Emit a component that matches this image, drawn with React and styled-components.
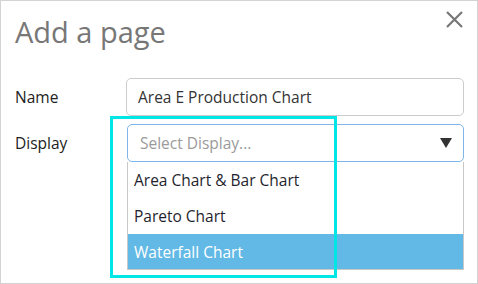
import styled, { createGlobalStyle } from "styled-components"

const GlobalStyle = createGlobalStyle`
    html, body {
        margin: 0;
        padding: 0;
        background: #fff;
    }
    body {
        font-family: "Open Sans", "Noto Sans", sans-serif;
    }
`

export default function App(){
    const options = ["Area Chart & Bar Chart", "Pareto Chart", "Waterfall Chart"]
    const selected = 2

    return(
        <>
        <GlobalStyle/>
        <Dialog>
            <Header>
                <Title>Add a page</Title>
                <Close aria-label="Close">
                    <svg width="17" height="17" viewBox="0 0 17 17">
                        <path d="M1 1 L16 16 M16 1 L1 16" stroke="#777" strokeWidth="2.2" fill="none"/>
                    </svg>
                </Close>
            </Header>
            <Form>
                <Label>Name</Label>
                <Input defaultValue="Area E Production Chart"/>
                <Label>Display</Label>
                <SelectWrap>
                    <Select>
                        <Placeholder>Select Display...</Placeholder>
                        <svg width="12" height="10" viewBox="0 0 12 10">
                            <polygon points="0,0 12,0 6,10" fill="#333"/>
                        </svg>
                    </Select>
                    <Menu>
                        {options.map((opt, i)=>(
                            <Option key={opt} active={i === selected}>{opt}</Option>
                        ))}
                    </Menu>
                </SelectWrap>
            </Form>
            <Highlight/>
        </Dialog>
        </>
    )
}

const Dialog = styled.div`
    position: relative;
    width: 478px;
    height: 284px;
    box-sizing: border-box;
    border: 1px solid #d3d3d3;
    background: #fff;
    padding: 12px 12px 0 14px;
`

const Header = styled.div`
    display: flex;
    justify-content: space-between;
    align-items: flex-start;
`

const Title = styled.h1`
    margin: 0;
    font-size: 29px;
    line-height: 38px;
    font-weight: 400;
    color: #777;
`

const Close = styled.button`
    margin: -2px 2px 0 0;
    padding: 0;
    border: none;
    background: none;
    width: 17px;
    height: 17px;
    display: flex;
`

const Form = styled.div`
    margin-top: 27px;
    display: grid;
    grid-template-columns: 111px 338px;
    row-gap: 8px;
    align-items: center;
    font-size: 15.5px;
`

const Label = styled.label`
    color: #222;
`

const Input = styled.input`
    box-sizing: border-box;
    width: 338px;
    height: 38px;
    border: 1px solid #ccc;
    border-radius: 5px;
    padding: 0 11px;
    font-family: inherit;
    font-size: 15.5px;
    color: #333;
    outline: none;
`

const SelectWrap = styled.div`
    position: relative;
    margin-left: 1px;
`

const Select = styled.div`
    box-sizing: border-box;
    height: 38px;
    border: 1px solid #80b5ea;
    border-radius: 5px;
    padding: 0 11px 0 12px;
    display: flex;
    justify-content: space-between;
    align-items: center;
`

const Placeholder = styled.span`
    color: #9a9a9a;
`

const Menu = styled.div`
    position: absolute;
    top: 100%;
    left: 0;
    right: 0;
    border: 1px solid #c8c8c8;
    border-top: none;
    background: #fff;
    z-index: 2;
`

const Option = styled.div`
    height: ${p => p.active ? "35px" : "36px"};
    display: flex;
    align-items: center;
    padding-left: 6px;
    color: ${p => p.active ? "#fff" : "#1f1f2e"};
    background: ${p => p.active ? "#62b9e5" : "#fff"};
`

const Highlight = styled.div`
    position: absolute;
    left: 109px;
    top: 115px;
    width: 227px;
    height: 162px;
    box-sizing: border-box;
    border: 3px solid #00e5e5;
    z-index: 3;
    pointer-events: none;
`
